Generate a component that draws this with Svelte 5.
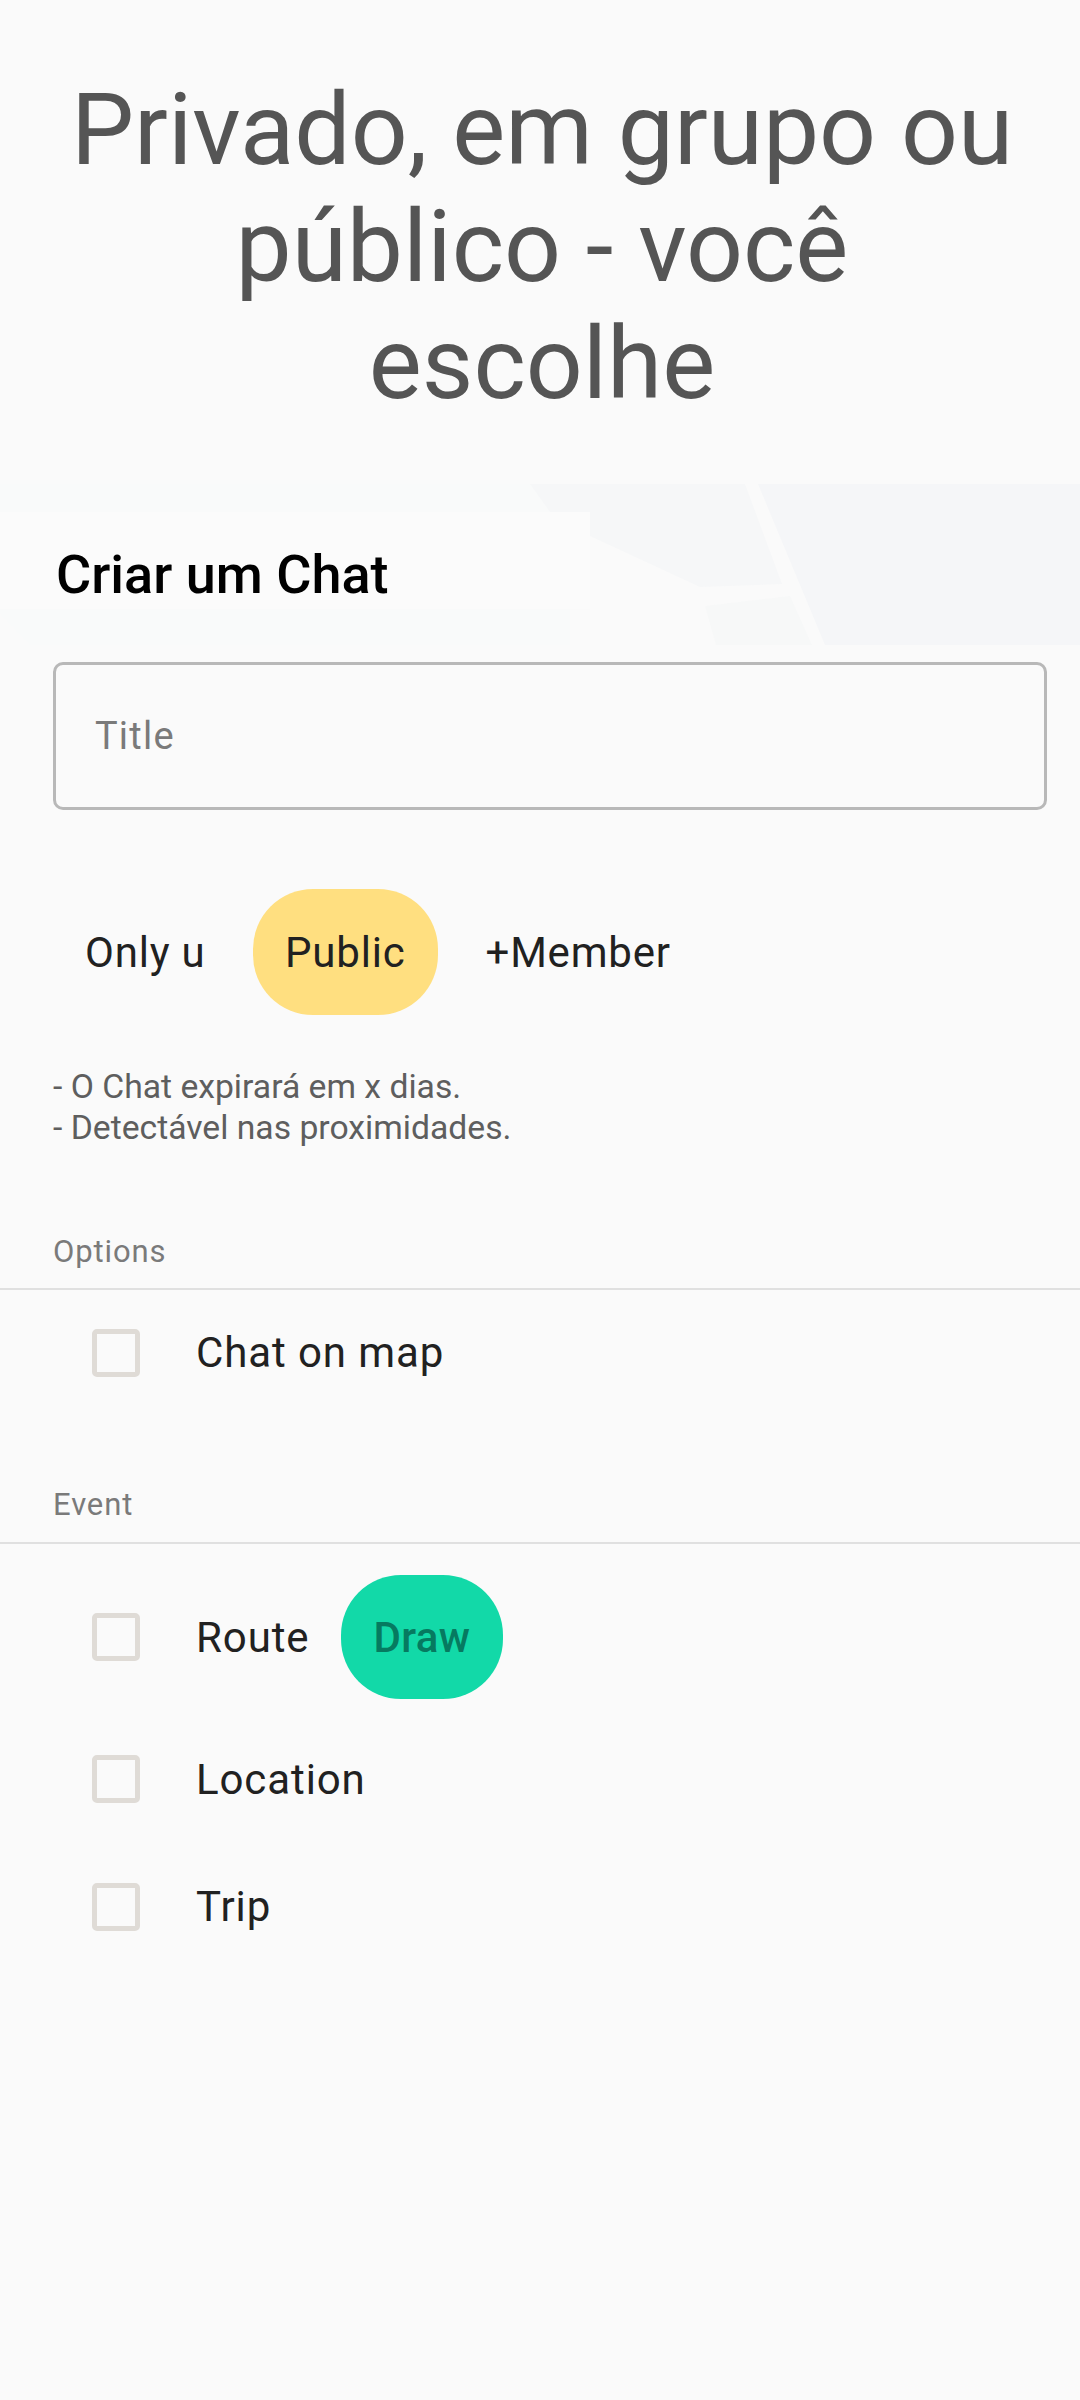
<script>
    const options = [{ label: 'Chat on map' }];
    const events = [
        { label: 'Route', action: 'Draw' },
        { label: 'Location' },
        { label: 'Trip' }
    ];
</script>

<main class="page">
    <header class="hero">
        <h1>Privado, em grupo ou público - você escolhe</h1>
    </header>

    <section class="create">
        <svg class="map" viewBox="0 0 1080 161" preserveAspectRatio="none" aria-hidden="true">
            <path d="M0 0H535L550 28H20L28 125H570V161H30L0 130Z" fill="#f9fafa"/>
            <path d="M0 28H590V125H0Z" fill="#fbfbfb"/>
            <path d="M530 0H745L782 100L700 103L590 52V28H550Z" fill="#f6f7f8"/>
            <path d="M705 122L790 112L812 161H716Z" fill="#f7f8f8"/>
            <path d="M758 0H1080V161H825Z" fill="#f5f6f8"/>
        </svg>
        <h2>Criar um Chat</h2>
        <div class="field"><span>Title</span></div>

        <div class="segments">
            <span class="chip">Only u</span>
            <span class="chip selected">Public</span>
            <span class="chip">+Member</span>
        </div>

        <p class="notes">- O Chat expirará em x dias.<br>- Detectável nas proximidades.</p>
    </section>

    <section class="group options">
        <h3>Options</h3>
        <div class="rows">
            {#each options as item}
                <div class="row">
                    <span class="box"></span>
                    <span class="label">{item.label}</span>
                </div>
            {/each}
        </div>
    </section>

    <section class="group events">
        <h3>Event</h3>
        <div class="rows">
            {#each events as item}
                <div class="row">
                    <span class="box"></span>
                    <span class="label">{item.label}</span>
                    {#if item.action}
                        <span class="action">{item.action}</span>
                    {/if}
                </div>
            {/each}
        </div>
    </section>
</main>

<style>
    :global(body) {
        background: #fafafa;
    }
    .page {
        min-height: 2400px;
        background: #fafafa;
        font-family: Roboto, sans-serif;
        overflow: hidden;
    }
    .hero {
        height: 484px;
        box-sizing: border-box;
        padding: 71px 58px 0 62px;
    }
    h1 {
        margin: 0;
        font-size: 100px;
        line-height: 117px;
        font-weight: 400;
        color: #555;
        text-align: center;
    }
    .create {
        position: relative;
        padding: 0 33px 0 53px;
    }
    .map {
        position: absolute;
        left: 0;
        top: 0;
        width: 1080px;
        height: 161px;
    }
    h2 {
        position: relative;
        margin: 0 0 0 3px;
        padding-top: 62px;
        height: 118px;
        box-sizing: border-box;
        font-size: 54px;
        line-height: 58px;
        font-weight: 500;
        color: #000;
    }
    .field {
        position: relative;
        display: flex;
        align-items: center;
        height: 148px;
        margin-top: 60px;
        box-sizing: border-box;
        border: 3px solid #b8b8b8;
        border-radius: 10px;
        padding-left: 39px;
        font-size: 38px;
        letter-spacing: 1.2px;
        color: #7a7a7a;
    }
    .segments {
        display: flex;
        align-items: center;
        gap: 16px;
        height: 126px;
        margin-top: 79px;
    }
    .chip {
        display: flex;
        align-items: center;
        height: 100%;
        padding: 0 32px;
        font-size: 42px;
        letter-spacing: 0.8px;
        color: #212121;
    }
    .chip.selected {
        background: #ffdf80;
        border-radius: 60px;
        margin-left: -0.5px;
    }
    .notes {
        margin: 51px 0 0;
        font-size: 33.7px;
        line-height: 41px;
        color: #5e5e5e;
    }
    .group h3 {
        margin: 0;
        padding: 0 0 16px 53px;
        font-size: 31px;
        line-height: 40px;
        font-weight: 400;
        letter-spacing: 0.9px;
        color: #7a7a7a;
        border-bottom: 2px solid #e0e0e0;
    }
    .options {
        margin-top: 84px;
    }
    .events {
        margin-top: 70px;
    }
    .events h3 {
        padding-bottom: 17px;
    }
    .rows {
        display: flex;
        flex-direction: column;
    }
    .row {
        display: flex;
        align-items: center;
        padding-left: 92px;
    }
    .options .row {
        height: 125px;
    }
    .events .row:first-child {
        height: 124px;
        margin-top: 31px;
    }
    .events .row:nth-child(2) {
        height: 160px;
    }
    .events .row:nth-child(3) {
        height: 95px;
    }
    .box {
        flex: none;
        width: 48px;
        height: 48px;
        box-sizing: border-box;
        border: 5px solid #dfdbd6;
        border-radius: 5px;
    }
    .label {
        margin-left: 56px;
        font-size: 42px;
        letter-spacing: 0.9px;
        color: #212121;
    }
    .action {
        display: flex;
        align-items: center;
        height: 124px;
        margin-left: 31px;
        padding: 0 33px;
        background: #12d9a8;
        border-radius: 60px;
        font-size: 42px;
        font-weight: 500;
        letter-spacing: 0.4px;
        color: #067a60;
    }
</style>
